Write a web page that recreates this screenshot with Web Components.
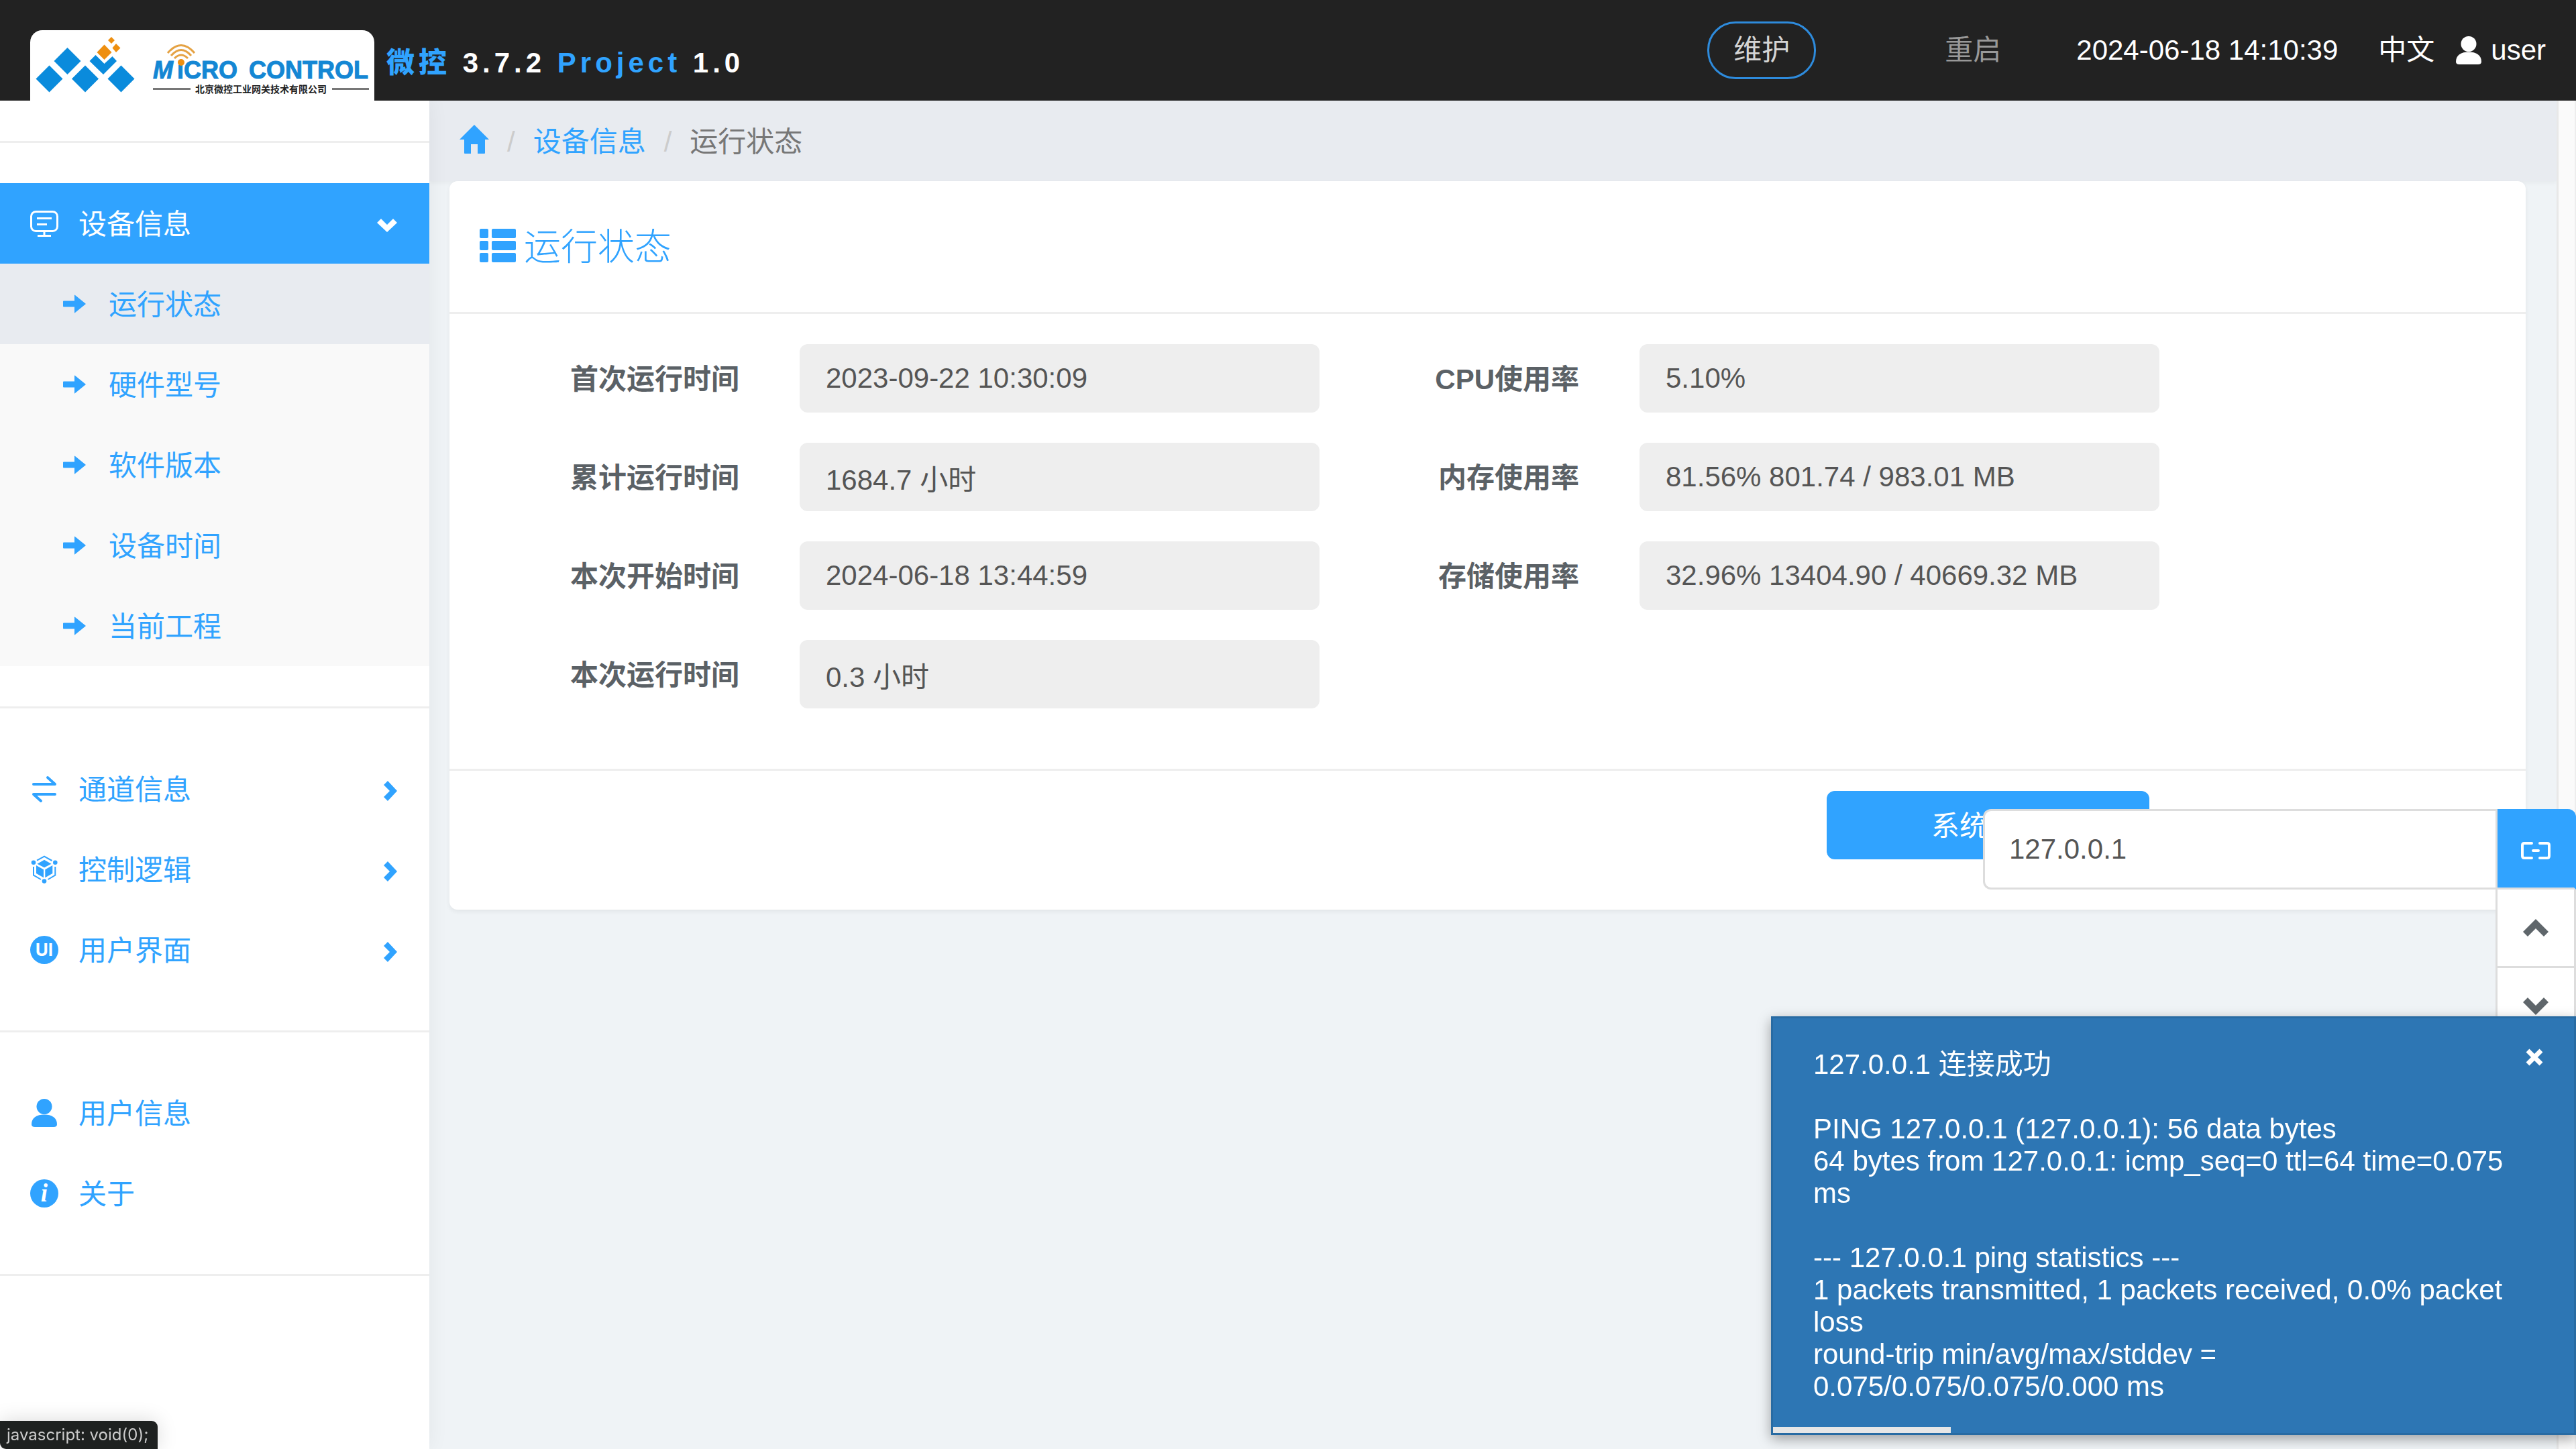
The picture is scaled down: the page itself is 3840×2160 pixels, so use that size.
<!DOCTYPE html>
<html lang="zh-CN">
<head>
<meta charset="UTF-8">
<title>运行状态</title>
<style>
  body {
    margin: 0;
    font-family: "Liberation Sans", "Noto Sans CJK SC", sans-serif;
    font-size: 42px;
    line-height: 60px;
    color: #555;
    background-color: #eff3f6;
    --main: #30a3ff;
    --line: #eee;
  }
</style>
</head>
<body>
<app-shell>
  <app-header slot="header"></app-header>
  <side-menu slot="menu"></side-menu>
  <bread-crumb slot="content"></bread-crumb>
  <status-card slot="content" heading="运行状态">
    <div slot="left">
      <status-field label="首次运行时间" value="2023-09-22 10:30:09"></status-field>
      <status-field label="累计运行时间" value="1684.7 小时"></status-field>
      <status-field label="本次开始时间" value="2024-06-18 13:44:59"></status-field>
      <status-field label="本次运行时间" value="0.3 小时"></status-field>
    </div>
    <div slot="right">
      <status-field label="CPU使用率" value="5.10%"></status-field>
      <status-field label="内存使用率" value="81.56% 801.74 / 983.01 MB"></status-field>
      <status-field label="存储使用率" value="32.96% 13404.90 / 40669.32 MB"></status-field>
    </div>
  </status-card>
</app-shell>
<ping-tool></ping-tool>
<toast-message>127.0.0.1 连接成功

PING 127.0.0.1 (127.0.0.1): 56 data bytes
64 bytes from 127.0.0.1: icmp_seq=0 ttl=64 time=0.075
ms

--- 127.0.0.1 ping statistics ---
1 packets transmitted, 1 packets received, 0.0% packet
loss
round-trip min/avg/max/stddev =
0.075/0.075/0.075/0.000 ms</toast-message>
<link-hint>javascript: void(0);</link-hint>

<script>
// [width, height, markup]
const ICONS = {
  monitor: [42, 42, `<g fill="none" stroke="currentColor" stroke-width="3"><rect x="1.5" y="3.5" width="39" height="29" rx="7"/><path d="M10 13.5h22M10 22.5h15M21 33v6M11 39.5h20"/></g>`],
  swap: [42, 42, `<path d="M5 14h32L26 4M37 29H5l11 10" fill="none" stroke="currentColor" stroke-width="4" stroke-linecap="round" stroke-linejoin="round"/>`],
  cube: [42, 42, `<path d="M5 17v12.700l11 6.300M37.300 17v12.700L26.500 36M10 7.700l11-6 11.500 6.300" fill="none" stroke="currentColor" stroke-width="2"/><circle cx="5" cy="10.700" r="3.300"/><circle cx="37.300" cy="10.700" r="3.300"/><circle cx="21" cy="38.600" r="3.300"/><path d="M21 6.700l10.500 6L21 18.300l-10.500-5.600zM9 15l11 6.300v12L9 27zM33.300 15l-11 6.300v12l11-6.300z"/>`],
  ui: [42, 42, `<circle cx="21" cy="21" r="21"/><text x="21" y="30" font-family="Inter" font-weight="700" font-size="26" text-anchor="middle" fill="#fff">UI</text>`],
  user: [42, 42, `<circle cx="21" cy="11.500" r="11.500"/><path d="M2 38C2 28 10 23.500 21 23.500S40 28 40 38q0 4-5 4H7q-5 0-5-4z"/>`],
  info: [42, 42, `<circle cx="21" cy="21" r="21"/><text x="21" y="33" font-family="Liberation Serif" font-weight="700" font-style="italic" font-size="37" text-anchor="middle" fill="#fff">i</text>`],
  arrow: [34, 28, `<path d="M1 9.500h16V1q0-1 1 0l16 13-16 13q-1 1-1 0v-8.500H1q-1 0-1-1v-7q0-1 1-1z"/>`],
  right: [20, 30, `<path d="M0 6l6-6 14 15L6 30l-6-6 9-9z"/>`],
  down: [30, 20, `<path d="M6 0l9 9 9-9 6 6-15 14L0 6z"/>`],
  up2: [38, 26, `<path d="M0 19L19 0l19 19-7 7-12-12L7 26z"/>`],
  down2: [38, 26, `<path d="M0 7l7-7 12 12L31 0l7 7-19 19z"/>`],
  home: [44, 43, `<path d="M22 0l22 22h-6v20q0 1-1 1H27V29H17v14H8q-1 0-1-1V22H0z"/>`],
  list: [54, 50, `<rect width="13" height="14" rx="2"/><rect y="18" width="13" height="14" rx="2"/><rect y="36" width="13" height="14" rx="2"/><rect x="18" width="36" height="14" rx="2"/><rect x="18" y="18" width="36" height="14" rx="2"/><rect x="18" y="36" width="36" height="14" rx="2"/>`],
  link: [44, 26, `<path d="M16 2H5Q2 2 2 5v16q0 3 3 3h11M28 2h11q3 0 3 3v16q0 3-3 3H28M18 13h8" fill="none" stroke="currentColor" stroke-width="4" stroke-linecap="round"/>`],
  close: [28, 26, `<path d="M4 3l20 20M24 3L4 23" fill="none" stroke="currentColor" stroke-width="7"/>`]
};

class UiIcon extends HTMLElement {
  connectedCallback() {
    const [w, h, body] = ICONS[this.getAttribute("name")];
    const shadow = this.attachShadow({ mode: "open" });
    shadow.innerHTML = `
    <svg width="${w}" height="${h}" viewBox="0 0 ${w} ${h}" fill="currentColor" aria-hidden="true">${body}</svg>
    <style>
    :host { display: inline-flex; flex: none; }
    svg { display: block; }
    </style>`;
  }
}

class AppShell extends HTMLElement {
  connectedCallback() {
    const shadow = this.attachShadow({ mode: "open" });
    shadow.innerHTML = `
    <slot name="header"></slot>
    <div class="body">
      <slot name="menu"></slot>
      <main><slot name="content"></slot></main>
      <div class="scroll-track"></div>
    </div>
    <style>
    :host {
      display: flex;
      flex-direction: column;
      min-height: 100vh;
    }
    .body {
      display: flex;
      flex: 1;
    }
    main {
      flex: 1;
      min-width: 0;
    }
    .scroll-track {
      width: 24px;
      background-color: #fafafa;
      border-left: 3px solid #e8e8e8;
      border-right: 2px solid #ededed;
    }
    </style>`;
  }
}

class MicroLogo extends HTMLElement {
  connectedCallback() {
    const shadow = this.attachShadow({ mode: "open" });
    shadow.innerHTML = `
    <svg width="513" height="105" viewBox="45 45 513 105" role="img" aria-label="Micro Control">
      <g fill="#0a8bdc">
        <path d="M100.500 71l20 20-20 20-20-20zM73.500 97.500l20 20-20 20-20-20zM127 97.500l20 20-20 20-20-20zM180.500 97.500l20 20-20 20-20-20z"/>
        <path d="M133.500 91l9-9 13 13 12-11 6.500 7-20 20z"/>
      </g>
      <path fill="#ee8f10" d="M155.500 66.500l11 11.500-11 11-11-11zM173 65l6.500 6.500-6.500 6.500-5.500-6.500zM166 55l5 5-5 5-5-5z"/>
      <g font-family="Liberation Sans" font-weight="700" font-size="36" fill="#1487d4" stroke="#1487d4">
        <text x="228" y="117" font-style="italic">M</text>
        <text x="264" y="117">iCRO</text>
        <text x="371" y="117">CONTROL</text>
      </g>
      <circle cx="270" cy="93" r="5" fill="#ee8f10"/>
      <path d="M260 87q10-10 20 0M255 83q15-17 30 0M250 79q20-23 40 0" fill="none" stroke="#e5a243" stroke-width="3"/>
      <path d="M228 132.500h56M495 132.500h55" stroke="#777" stroke-width="3"/>
      <text x="291" y="138" font-family="Noto Sans CJK SC" font-weight="700" font-size="14" fill="#222">北京微控工业网关技术有限公司</text>
    </svg>
    <style>
    :host {
      display: block;
      background-color: #fff;
      border-radius: 18px 18px 0 0;
    }
    svg { display: block; }
    </style>`;
  }
}

class AppHeader extends HTMLElement {
  connectedCallback() {
    const shadow = this.attachShadow({ mode: "open" });
    shadow.innerHTML = `
    <header>
      <micro-logo></micro-logo>
      <div class="title"><b>微控</b> 3.7.2 <b>Project</b> 1.0</div>
      <div class="tools">
        <button class="maintain">维护</button>
        <button class="restart">重启</button>
        <time>2024-06-18 14:10:39</time>
        <a class="lang" href="#">中文</a>
        <a class="user" href="#"><ui-icon name="user"></ui-icon>user</a>
      </div>
    </header>
    <style>
    :host { display: block; }
    header {
      display: flex;
      align-items: flex-end;
      height: 150px;
      padding: 0 45px;
      box-sizing: border-box;
      background-color: #222;
      color: #fff;
    }
    .title {
      flex: 1;
      padding: 0 0 26px 18px;
      font-weight: 700;
      letter-spacing: 6px;
      white-space: nowrap;
    }
    .title b { color: var(--main); }
    .tools {
      display: flex;
      align-items: center;
      height: 150px;
      white-space: nowrap;
    }
    button {
      font: inherit;
      padding: 0;
      border: 0;
      background: none;
      color: #999;
    }
    .maintain {
      height: 86px;
      padding: 0 36px;
      border: 3px solid #2e8bdc;
      border-radius: 42px;
      color: #d4d4d4;
    }
    .restart { margin: 0 112px 0 192px; }
    a {
      color: inherit;
      text-decoration: none;
    }
    .lang { margin: 0 30px 0 60px; }
    .user {
      display: flex;
      align-items: center;
      gap: 12px;
    }
    </style>`;
  }
}

class MenuItem extends HTMLElement {
  connectedCallback() {
    const shadow = this.attachShadow({ mode: "open" });
    const chevron = this.getAttribute("chevron");
    shadow.innerHTML = `
    <a href="#">
      <ui-icon name="${this.getAttribute("icon")}"></ui-icon>
      <span><slot></slot></span>
      ${chevron ? `<ui-icon class="chevron" name="${chevron}"></ui-icon>` : ""}
    </a>
    <style>
    :host { display: block; }
    a {
      display: flex;
      align-items: center;
      gap: 30px;
      height: 120px;
      padding: 0 48px 0 45px;
      color: var(--main);
      text-decoration: none;
    }
    span {
      flex: 1;
      padding-top: 3px;
    }
    .chevron { padding-top: 6px; }
    :host([open]) a {
      background-color: var(--main);
      color: #fff;
    }
    :host([sub]) a {
      gap: 34px;
      padding-left: 94px;
      background-color: #f9f9f9;
    }
    :host([sub][active]) a { background-color: #e8ebf0; }
    </style>`;
  }
}

class SideMenu extends HTMLElement {
  connectedCallback() {
    const shadow = this.attachShadow({ mode: "open" });
    shadow.innerHTML = `
    <nav>
      <hr>
      <menu-item icon="monitor" chevron="down" open>设备信息</menu-item>
      <menu-item icon="arrow" sub active>运行状态</menu-item>
      <menu-item icon="arrow" sub>硬件型号</menu-item>
      <menu-item icon="arrow" sub>软件版本</menu-item>
      <menu-item icon="arrow" sub>设备时间</menu-item>
      <menu-item icon="arrow" sub>当前工程</menu-item>
      <hr>
      <menu-item icon="swap" chevron="right">通道信息</menu-item>
      <menu-item icon="cube" chevron="right">控制逻辑</menu-item>
      <menu-item icon="ui" chevron="right">用户界面</menu-item>
      <hr>
      <menu-item icon="user">用户信息</menu-item>
      <menu-item icon="info">关于</menu-item>
      <hr>
    </nav>
    <style>
    :host {
      display: block;
      flex: none;
      width: 640px;
      background-color: #fff;
      box-shadow: 0 0 30px rgba(0, 0, 0, 0.06);
      position: relative;
      clip-path: inset(0 -40px 0 0);
    }
    nav {
      display: flex;
      flex-direction: column;
    }
    hr {
      width: 100%;
      height: 3px;
      margin: 60px 0;
      border: 0;
      background-color: var(--line);
    }
    </style>`;
  }
}

class BreadCrumb extends HTMLElement {
  connectedCallback() {
    const shadow = this.attachShadow({ mode: "open" });
    shadow.innerHTML = `
    <nav>
      <a class="home" href="#" aria-label="首页"><ui-icon name="home"></ui-icon></a>
      <i>/</i>
      <a href="#">设备信息</a>
      <i>/</i>
      <span>运行状态</span>
    </nav>
    <style>
    :host { display: block; }
    nav {
      display: flex;
      align-items: center;
      gap: 27px;
      height: 120px;
      box-sizing: border-box;
      padding: 3px 0 0 45px;
      background-color: #e8ebf0;
      box-shadow: 0 3px 6px rgba(0, 0, 0, 0.04);
      color: #777;
    }
    a {
      display: flex;
      color: var(--main);
      text-decoration: none;
    }
    .home { padding-bottom: 9px; }
    i {
      font-style: normal;
      color: #ccc;
    }
    </style>`;
  }
}

class StatusCard extends HTMLElement {
  connectedCallback() {
    const shadow = this.attachShadow({ mode: "open" });
    shadow.innerHTML = `
    <section>
      <h1><ui-icon name="list"></ui-icon>${this.getAttribute("heading")}</h1>
      <form>
        <slot name="left"></slot>
        <slot name="right"></slot>
      </form>
      <footer><button type="button">系统</button></footer>
    </section>
    <style>
    :host {
      display: block;
      margin: 0 46px 0 30px;
      position: relative;
    }
    section {
      background-color: #fff;
      border-radius: 12px;
      box-shadow: 0 3px 6px rgba(0, 0, 0, 0.06);
    }
    h1 {
      display: flex;
      align-items: center;
      gap: 12px;
      height: 195px;
      margin: 0;
      padding-left: 45px;
      font-size: 55px;
      font-weight: 300;
      color: var(--main);
      border-bottom: 3px solid var(--line);
    }
    h1 ui-icon { padding-bottom: 3px; }
    form {
      display: grid;
      grid-template-columns: 1297fr 1252fr 546fr;
      padding: 45px 0;
    }
    footer {
      display: flex;
      justify-content: flex-end;
      padding: 30px 561px 75px 0;
      border-top: 3px solid var(--line);
    }
    button {
      width: 481px;
      height: 102px;
      padding: 3px 156px 0;
      border: 0;
      border-radius: 12px;
      background-color: var(--main);
      color: #fff;
      font: inherit;
      text-align: left;
    }
    </style>`;
  }
}

class StatusField extends HTMLElement {
  connectedCallback() {
    const shadow = this.attachShadow({ mode: "open" });
    shadow.innerHTML = `
    <label for="value">${this.getAttribute("label")}</label>
    <input id="value" type="text" value="${this.getAttribute("value")}" readonly>
    <style>
    :host {
      display: grid;
      grid-template-columns: 1fr minmax(0, 775px);
      align-items: center;
      gap: 90px;
      margin-bottom: 45px;
    }
    label {
      padding-top: 3px;
      font-weight: 700;
      text-align: right;
      color: #5b6166;
      white-space: nowrap;
    }
    input {
      width: 100%;
      height: 102px;
      box-sizing: border-box;
      padding: 0 39px;
      border: 0;
      border-radius: 12px;
      background-color: #eee;
      color: #555;
      font: inherit;
    }
    </style>`;
  }
}

class PingTool extends HTMLElement {
  connectedCallback() {
    const shadow = this.attachShadow({ mode: "open" });
    shadow.innerHTML = `
    <input type="text" value="127.0.0.1" aria-label="IP">
    <div class="buttons">
      <button class="go" aria-label="ping"><ui-icon name="link"></ui-icon></button>
      <button aria-label="up"><ui-icon name="up2"></ui-icon></button>
      <button aria-label="down"><ui-icon name="down2"></ui-icon></button>
    </div>
    <style>
    :host {
      display: flex;
      align-items: flex-start;
      position: fixed;
      top: 1206px;
      right: 0;
    }
    input {
      width: 764px;
      height: 120px;
      box-sizing: border-box;
      padding: 0 36px;
      border: 3px solid #ddd;
      border-right: 0;
      border-radius: 12px 0 0 12px;
      background-color: #fff;
      color: #555;
      font: inherit;
    }
    .buttons {
      display: flex;
      flex-direction: column;
      width: 120px;
    }
    button {
      display: flex;
      align-items: center;
      justify-content: center;
      height: 117px;
      padding: 0;
      border: 3px solid #ddd;
      border-top: 0;
      background-color: #fff;
      color: #5f666b;
    }
    .go {
      height: 120px;
      padding-top: 6px;
      border-right-color: var(--main);
      border-radius: 0 12px 0 0;
      background-color: var(--main);
      color: #fff;
    }
    </style>`;
  }
}

class ToastMessage extends HTMLElement {
  connectedCallback() {
    const shadow = this.attachShadow({ mode: "open" });
    shadow.innerHTML = `
    <p><slot></slot></p>
    <button aria-label="close"><ui-icon name="close"></ui-icon></button>
    <div class="progress"></div>
    <style>
    :host {
      display: block;
      position: fixed;
      right: 0;
      bottom: 21px;
      width: 1200px;
      box-sizing: border-box;
      padding: 45px 60px;
      border: 3px solid #286ba3;
      background-color: #2d76b4;
      box-shadow: 0 6px 18px rgba(0, 0, 0, 0.35);
      color: #fff;
    }
    p {
      margin: 0;
      line-height: 48px;
      white-space: pre;
    }
    button {
      display: flex;
      position: absolute;
      top: 45px;
      right: 45px;
      padding: 0;
      border: 0;
      background: none;
      color: #fff;
    }
    .progress {
      position: absolute;
      left: 0;
      bottom: 0;
      width: 265px;
      height: 9px;
      background-color: #e6e6e6;
    }
    </style>`;
  }
}

class LinkHint extends HTMLElement {
  connectedCallback() {
    const shadow = this.attachShadow({ mode: "open" });
    shadow.innerHTML = `
    <slot></slot>
    <style>
    :host {
      display: block;
      position: fixed;
      left: 0;
      bottom: 0;
      padding: 0 14px 0 10px;
      border-radius: 0 9px 0 9px;
      background-color: #1e2120;
      box-shadow: 0 0 30px rgba(0, 0, 0, 0.15);
      color: #ccc;
      font-family: Inter, sans-serif;
      font-size: 24px;
      line-height: 42px;
    }
    </style>`;
  }
}

customElements.define("ui-icon", UiIcon);
customElements.define("micro-logo", MicroLogo);
customElements.define("app-shell", AppShell);
customElements.define("app-header", AppHeader);
customElements.define("menu-item", MenuItem);
customElements.define("side-menu", SideMenu);
customElements.define("bread-crumb", BreadCrumb);
customElements.define("status-card", StatusCard);
customElements.define("status-field", StatusField);
customElements.define("ping-tool", PingTool);
customElements.define("toast-message", ToastMessage);
customElements.define("link-hint", LinkHint);
</script>
</body>
</html>
